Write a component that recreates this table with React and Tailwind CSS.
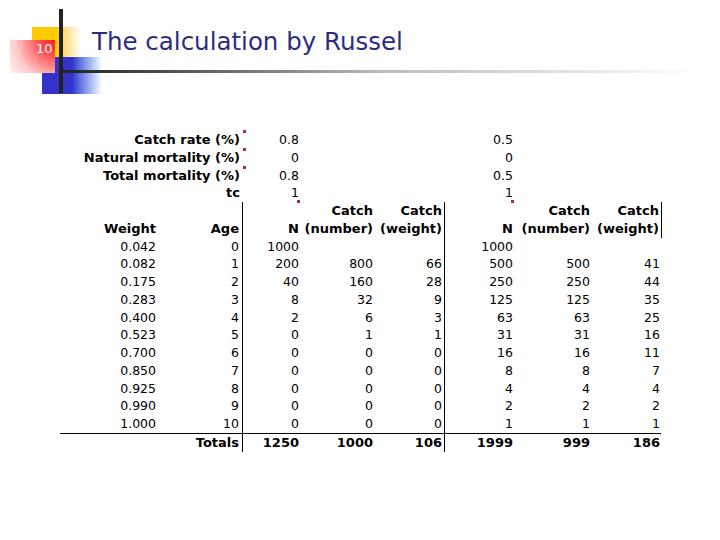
import React from "react";

const weights = ["0.042", "0.082", "0.175", "0.283", "0.400", "0.523", "0.700", "0.850", "0.925", "0.990", "1.000"];
const n1 = [1000, 200, 40, 8, 2, 0, 0, 0, 0, 0, 0];
const cn1 = ["", 800, 160, 32, 6, 1, 0, 0, 0, 0, 0];
const cw1 = ["", 66, 28, 9, 3, 1, 0, 0, 0, 0, 0];
const n2 = [1000, 500, 250, 125, 63, 31, 16, 8, 4, 2, 1];
const cn2 = ["", 500, 250, 125, 63, 31, 16, 8, 4, 2, 1];
const cw2 = ["", 41, 44, 35, 25, 16, 11, 7, 4, 2, 1];

const params = [
  ["Catch rate (%)", "0.8", "0.5"],
  ["Natural mortality (%)", "0", "0"],
  ["Total mortality (%)", "0.8", "0.5"],
  ["tc", "1", "1"],
];

const grid = "grid grid-cols-[100px_83px_59px_74px_69px_71px_77px_69px] h-[17.76px] leading-[17.76px]";

function Mark() {
  return <span className="absolute right-[-3px] top-[-1px] w-[3px] h-[3px] bg-[#b22a3a]" />;
}

export default function App() {
  return (
    <div className="w-[720px] h-[540px] bg-white overflow-hidden font-['DejaVu_Sans',sans-serif] text-black">
      <div className="relative h-[131px]">
        <div className="absolute left-[32px] top-[27px] w-[50px] h-[31px] bg-gradient-to-r from-[#ffcc00] via-[#ffcc00] to-white" />
        <div className="absolute left-[42px] top-[57px] w-[60px] h-[37px] bg-gradient-to-r from-[#3333cc] via-[#3333cc] to-white" />
        <div className="absolute left-[10px] top-[40px] w-[45px] h-[33px] bg-[radial-gradient(circle_at_100%_0%,#ff1a1a_0%,#ff5555_30%,#ffc8c8_70%,#fff4f4_100%)]" />
        <div className="absolute left-[59px] top-[9px] w-[4px] h-[84px] bg-[#222]" />
        <div className="absolute left-[61px] top-[70px] w-[640px] h-[3px] bg-gradient-to-r from-[#222] via-[#bbb] to-white" />
        <div className="absolute left-[36px] top-[41px] text-[13px] text-white leading-[16px]">10</div>
        <div className="absolute left-[92px] top-[25px] text-[24.5px] leading-[34px] text-[#2d2d80]">
          The calculation by Russel
        </div>
      </div>

      <div className="ml-[60px] text-[12.5px]">
        {params.map(([label, a, b], i) => (
          <div key={label} className={grid}>
            <div className="col-span-2 pr-[3px] text-right font-bold text-[13px] relative">
              {label}
              {i < 3 && <Mark />}
            </div>
            <div className="pr-[3px] text-right">{a}</div>
            <div />
            <div />
            <div className="pr-[3px] text-right">{b}</div>
            <div />
            <div />
          </div>
        ))}

        <div className={grid + " font-bold text-[13px]"}>
          <div />
          <div className="border-r border-black" />
          <div className="relative">
            <span className="absolute right-[2px] top-[-2px] w-[3px] h-[3px] bg-[#b22a3a]" />
          </div>
          <div className="pr-[3px] text-right">Catch</div>
          <div className="pr-[2px] text-right border-r border-black">Catch</div>
          <div className="relative">
            <span className="absolute right-[2px] top-[-2px] w-[3px] h-[3px] bg-[#b22a3a]" />
          </div>
          <div className="pr-[3px] text-right">Catch</div>
          <div className="pr-[2px] text-right border-r border-black">Catch</div>
        </div>
        <div className={grid + " font-bold text-[13px]"}>
          <div className="pr-[4px] text-right">Weight</div>
          <div className="pr-[3px] text-right border-r border-black">Age</div>
          <div className="pr-[3px] text-right">N</div>
          <div className="pr-[3px] text-right whitespace-nowrap">(number)</div>
          <div className="pr-[2px] text-right border-r border-black whitespace-nowrap">(weight)</div>
          <div className="pr-[3px] text-right">N</div>
          <div className="pr-[3px] text-right whitespace-nowrap">(number)</div>
          <div className="pr-[2px] text-right border-r border-black whitespace-nowrap">(weight)</div>
        </div>

        {weights.map((w, i) => (
          <div key={w} className={grid}>
            <div className="pr-[4px] text-right">{w}</div>
            <div className="pr-[3px] text-right border-r border-black">{i}</div>
            <div className="pr-[3px] text-right">{n1[i]}</div>
            <div className="pr-[3px] text-right">{cn1[i]}</div>
            <div className="pr-[2px] text-right border-r border-black">{cw1[i]}</div>
            <div className="pr-[3px] text-right">{n2[i]}</div>
            <div className="pr-[3px] text-right">{cn2[i]}</div>
            <div className="pr-[2px] text-right">{cw2[i]}</div>
          </div>
        ))}

        <div className={grid + " font-bold text-[13px] border-t border-black w-[601px] h-[19px]"}>
          <div />
          <div className="pr-[3px] text-right border-r border-black">Totals</div>
          <div className="pr-[3px] text-right">1250</div>
          <div className="pr-[3px] text-right">1000</div>
          <div className="pr-[2px] text-right border-r border-black">106</div>
          <div className="pr-[3px] text-right">1999</div>
          <div className="pr-[3px] text-right">999</div>
          <div className="pr-[2px] text-right">186</div>
        </div>
      </div>
    </div>
  );
}
